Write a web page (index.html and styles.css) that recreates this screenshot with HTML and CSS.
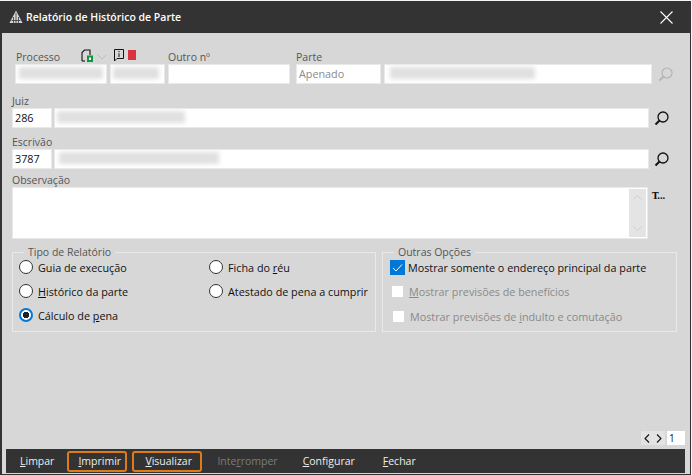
FILE: index.html
```html
<!DOCTYPE html>
<html lang="pt-BR">
<head>
    <meta charset="UTF-8">
    <meta name="viewport" content="width=device-width, initial-scale=1.0">
    <title>Relatório de Histórico de Parte</title>
    <link rel="stylesheet" href="styles.css">
</head>
<body>
<div class="window">
    <header class="title-bar">
        <svg class="logo" width="14" height="14" viewBox="0 0 14 14">
            <path d="M7 0.5 L13.5 13 H0.5 Z" fill="#d8d8d8"/>
            <path d="M7 3 V13 M4.5 7 V13 M9.5 7 V13 M2.5 10.5 H11.5" stroke="#333" stroke-width="0.8" fill="none"/>
        </svg>
        <h1>Relatório de Histórico de Parte</h1>
        <svg class="close" width="13" height="13" viewBox="0 0 13 13">
            <path d="M0.5 0.5 L12.5 12.5 M12.5 0.5 L0.5 12.5" stroke="#fff" stroke-width="1.1"/>
        </svg>
    </header>

    <main class="content">
        <section class="row-top">
            <div class="field-processo">
                <div class="label-line">
                    <label>Processo</label>
                    <svg class="doc-icon" width="13" height="14" viewBox="0 0 13 14">
                        <path d="M1 12 V3.5 L3.5 1 H9 V6" fill="none" stroke="#111" stroke-width="1.1"/>
                        <path d="M1 12 H4" stroke="#111" stroke-width="1.1"/>
                        <rect x="7" y="7.5" width="4" height="4.5" fill="#fff" stroke="#0a9a3a" stroke-width="2"/>
                    </svg>
                    <svg class="chev-icon" width="10" height="6" viewBox="0 0 10 6">
                        <path d="M0.5 0.5 L5 5 L9.5 0.5" fill="none" stroke="#bdbdbd"/>
                    </svg>
                    <svg class="info-icon" width="10" height="13" viewBox="0 0 10 13">
                        <path d="M0.5 0.5 H9.5 V9.5 H3 L0.5 12 Z" fill="none" stroke="#111"/>
                        <path d="M5 2 V3.2 M5 4.4 V8" stroke="#111"/>
                    </svg>
                    <span class="red-flag"></span>
                </div>
                <div class="input-pair">
                    <div class="input w-92"><span class="blur-bar bar-a"></span></div>
                    <div class="input w-55"><span class="blur-bar bar-b"></span></div>
                </div>
            </div>
            <div class="field field-outro">
                <label>Outro nº</label>
                <div class="input"></div>
            </div>
            <div class="field field-parte">
                <label>Parte</label>
                <div class="parte-inputs">
                    <div class="input w-85 muted">Apenado</div>
                    <div class="input grow"><span class="blur-bar bar-c"></span></div>
                </div>
            </div>
            <svg class="search dim" width="15" height="15" viewBox="0 0 15 15">
                <circle cx="9" cy="6" r="5" fill="none" stroke="#b4b4b4" stroke-width="1.2"/>
                <path d="M5.5 9.5 L1.5 13.5" stroke="#b4b4b4" stroke-width="1.8"/>
            </svg>
        </section>

        <section class="row-person juiz">
            <label>Juiz</label>
            <div class="person-inputs">
                <div class="input code">286</div>
                <div class="input grow"><span class="blur-bar bar-d"></span></div>
                <svg class="search" width="15" height="15" viewBox="0 0 15 15">
                    <circle cx="9" cy="6" r="5" fill="none" stroke="#111" stroke-width="1.3"/>
                    <path d="M5.5 9.5 L1.5 13.5" stroke="#111" stroke-width="2"/>
                </svg>
            </div>
        </section>

        <section class="row-person escrivao">
            <label>Escrivão</label>
            <div class="person-inputs">
                <div class="input code">3787</div>
                <div class="input grow"><span class="blur-bar bar-e"></span></div>
                <svg class="search" width="15" height="15" viewBox="0 0 15 15">
                    <circle cx="9" cy="6" r="5" fill="none" stroke="#111" stroke-width="1.3"/>
                    <path d="M5.5 9.5 L1.5 13.5" stroke="#111" stroke-width="2"/>
                </svg>
            </div>
        </section>

        <section class="row-obs">
            <label>Observação</label>
            <div class="obs-line">
                <div class="textarea">
                    <div class="scrollbar">
                        <svg width="9" height="5" viewBox="0 0 9 5"><path d="M0.5 4.5 L4.5 0.5 L8.5 4.5" fill="none" stroke="#cfcfcf"/></svg>
                        <svg width="9" height="5" viewBox="0 0 9 5"><path d="M0.5 0.5 L4.5 4.5 L8.5 0.5" fill="none" stroke="#cfcfcf"/></svg>
                    </div>
                </div>
                <span class="font-btn">T...</span>
            </div>
        </section>

        <section class="groups">
            <fieldset class="group group-tipo">
                <legend>Tipo de Relatório</legend>
                <div class="radio-grid">
                    <div class="radio-item"><span class="radio"></span><span>Guia de execução</span></div>
                    <div class="radio-item"><span class="radio"></span><span>Ficha do <u>r</u>éu</span></div>
                    <div class="radio-item"><span class="radio"></span><span><u>H</u>istórico da parte</span></div>
                    <div class="radio-item"><span class="radio"></span><span>Atestado de pena a cumprir</span></div>
                    <div class="radio-item"><span class="radio checked"></span><span>Cálculo de <u>p</u>ena</span></div>
                </div>
            </fieldset>
            <fieldset class="group group-outras">
                <legend>Outras Opções</legend>
                <div class="check-item">
                    <span class="check on">
                        <svg width="15" height="15" viewBox="0 0 15 15"><path d="M3 8 L6 11 L12 4.5" fill="none" stroke="#fff" stroke-width="1"/></svg>
                    </span>
                    <span>Mostrar somente o endereço principal da parte</span>
                </div>
                <div class="check-item off"><span class="check"></span><span><u>M</u>ostrar previsões de benefícios</span></div>
                <div class="check-item off third"><span class="check"></span><span>Mostrar previsões de <u>i</u>ndulto e comutação</span></div>
            </fieldset>
        </section>

        <nav class="pager">
            <div class="pager-arrows">
                <svg width="6" height="9" viewBox="0 0 6 9"><path d="M5 0.5 L1 4.5 L5 8.5" fill="none" stroke="#111" stroke-width="1.1"/></svg>
                <svg width="6" height="9" viewBox="0 0 6 9"><path d="M1 0.5 L5 4.5 L1 8.5" fill="none" stroke="#111" stroke-width="1.1"/></svg>
            </div>
            <div class="pager-num">1</div>
        </nav>
    </main>

    <footer class="toolbar">
        <span class="tool t-limpar"><u>L</u>impar</span>
        <span class="tool t-imprimir boxed"><u>I</u>mprimir</span>
        <span class="tool t-visualizar boxed"><u>V</u>isualizar</span>
        <span class="tool t-interromper disabled">Inte<u>r</u>romper</span>
        <span class="tool t-configurar"><u>C</u>onfigurar</span>
        <span class="tool t-fechar"><u>F</u>echar</span>
    </footer>
</div>
</body>
</html>
```

FILE: styles.css
```css
:root {
    --dark: #333333;
    --panel: #d7d7d7;
    --line: #e9e9e9;
    --font-family: "Open Sans", "Noto Sans", Arial, sans-serif;
}
* {
    box-sizing: border-box;
}
body {
    margin: 0;
    padding: 0;
    background-color: #f4f4f4;
    font-family: var(--font-family);
    font-size: 10.8px;
    color: #111;
}
label {
    display: block;
    color: #555;
    font-size: 10.5px;
    line-height: 14px;
}
u {
    text-underline-offset: 1px;
}
.window {
    width: 691px;
    height: 474px;
    margin-top: 1px;
    display: flex;
    flex-direction: column;
    background-color: var(--panel);
    border: 1px solid var(--dark);
    border-top: none;
    border-left-width: 2px;
}
.title-bar {
    height: 32px;
    margin-left: -2px;
    margin-right: -1px;
    flex-shrink: 0;
    display: flex;
    align-items: center;
    padding: 0 18px 0 9px;
    background-color: var(--dark);
    color: #fff;
}
.title-bar h1 {
    margin: 0 0 0 3px;
    font-size: 10.5px;
    font-weight: 600;
    flex: 1;
}
.content {
    flex: 1;
    display: flex;
    flex-direction: column;
    padding: 0 5px 0 10px;
}
.input {
    height: 20px;
    background-color: #fff;
    border: 1px solid var(--line);
    padding-left: 2px;
    line-height: 18px;
    overflow: hidden;
}
.muted {
    color: #8a8a8a;
}
.grow {
    flex: 1;
}
.blur-bar {
    display: block;
    height: 12px;
    margin-top: 2px;
    background-color: #e0e0e0;
    filter: blur(2px);
}
.bar-a { width: 84px; margin-left: 1px; }
.bar-b { width: 46px; }
.bar-c { width: 145px; margin-left: 3px; }
.bar-d { width: 128px; }
.bar-e { width: 160px; margin-left: 2px; }

.row-top {
    display: flex;
    align-items: flex-end;
    margin-top: 17px;
    padding-left: 3px;
}
.field-processo {
    width: 153px;
}
.label-line {
    display: flex;
    align-items: center;
    height: 14px;
    padding-left: 1px;
}
.doc-icon { margin-left: 21px; margin-top: -2px; }
.chev-icon { margin-left: 3px; margin-top: -1px; }
.info-icon { margin-left: 7px; margin-top: -3px; }
.red-flag {
    width: 8px;
    height: 10px;
    margin-left: 4px;
    margin-top: -5px;
    background-color: #d9343f;
}
.input-pair {
    display: flex;
    gap: 3px;
}
.w-92 { width: 92px; }
.w-55 { width: 55px; }
.w-85 { width: 85px; }
.field-outro {
    width: 122px;
}
.field-parte {
    width: 356px;
    margin-left: 6px;
}
.parte-inputs {
    display: flex;
    gap: 3px;
}
.search {
    flex-shrink: 0;
    margin-left: 6px;
}
.row-top .search {
    margin-bottom: 2px;
}
.row-person.juiz {
    margin-top: 10px;
}
.row-person.escrivao {
    margin-top: 7px;
}
.person-inputs {
    display: flex;
    align-items: center;
    gap: 2px;
}
.person-inputs .search {
    margin-left: 3px;
    margin-right: 16px;
}
.code {
    width: 40px;
    color: #111;
}
.row-obs {
    margin-top: 4px;
}
.obs-line {
    display: flex;
}
.textarea {
    width: 636px;
    height: 52px;
    display: flex;
    justify-content: flex-end;
    background-color: #fff;
    border: 1px solid var(--line);
    padding: 1px;
}
.scrollbar {
    width: 17px;
    display: flex;
    flex-direction: column;
    justify-content: space-between;
    align-items: center;
    padding: 6px 0;
    background-color: #e4e4e4;
}
.font-btn {
    margin: 4px 0 0 4px;
    font-family: "DejaVu Serif", serif;
    font-size: 9px;
    font-weight: bold;
    letter-spacing: -0.5px;
}
.groups {
    display: flex;
    gap: 6px;
    margin-top: 6px;
}
.group {
    margin: 0;
    padding: 0;
    height: 87px;
    border: 1px solid var(--line);
}
.group legend {
    margin-left: 11px;
    padding: 0 4px;
    color: #555;
    font-size: 10.5px;
    line-height: 14px;
}
.group-tipo {
    width: 364px;
}
.group-outras {
    width: 295px;
}
.radio-grid {
    display: grid;
    grid-template-columns: 190px 1fr;
    grid-auto-rows: 24px;
    padding-left: 6px;
    margin-top: -4px;
}
.radio-item {
    display: flex;
    align-items: center;
    gap: 5px;
    white-space: nowrap;
}
.radio {
    width: 14px;
    height: 14px;
    flex-shrink: 0;
    border-radius: 50%;
    border: 1.5px solid #333;
    background-color: #fff;
}
.radio.checked {
    border: 2px solid #0078d7;
    background: radial-gradient(circle, #222 0 3px, #fff 3.5px);
}
.check-item {
    height: 24.5px;
    display: flex;
    align-items: center;
    gap: 3px;
    padding-left: 7px;
    white-space: nowrap;
}
.group-outras .check-item:first-of-type {
    margin-top: -4px;
}
.check {
    width: 11px;
    height: 11px;
    margin-left: 2px;
    margin-right: 1px;
    background-color: #fff;
    flex-shrink: 0;
}
.check.on {
    width: 15px;
    height: 15px;
    margin: 0;
    background-color: #0078d7;
}
.check svg {
    display: block;
}
.check-item.off {
    color: #8a8a8a;
}
.check-item.off .check {
    margin-right: 3px;
}
.check-item.third {
    padding-left: 8px;
}
.pager {
    margin-top: auto;
    margin-bottom: 4px;
    display: flex;
    justify-content: flex-end;
    gap: 2px;
}
.pager-arrows {
    width: 24px;
    height: 14px;
    display: flex;
    align-items: center;
    justify-content: space-between;
    padding: 0 3px;
    background-color: #e3e3e3;
}
.pager-num {
    width: 18px;
    height: 14px;
    line-height: 14px;
    padding-left: 2px;
    background-color: #fff;
    font-size: 10px;
}
.toolbar {
    height: 24px;
    margin: 0 5px 1px 4px;
    flex-shrink: 0;
    display: flex;
    align-items: center;
    background-color: var(--dark);
    color: #eee;
    font-size: 10.5px;
}
.tool {
    white-space: nowrap;
}
.boxed {
    height: 21px;
    line-height: 16px;
    border: 2px solid #e07b1a;
    border-radius: 3px;
}
.disabled {
    color: #7c7c7c;
}
.t-limpar { margin-left: 14px; }
.t-imprimir { margin-left: 13px; width: 60px; padding-left: 9px; }
.t-visualizar { margin-left: 5px; width: 70px; padding-left: 11px; }
.t-interromper { margin-left: 15px; }
.t-configurar { margin-left: 25px; }
.t-fechar { margin-left: 28px; }
```
